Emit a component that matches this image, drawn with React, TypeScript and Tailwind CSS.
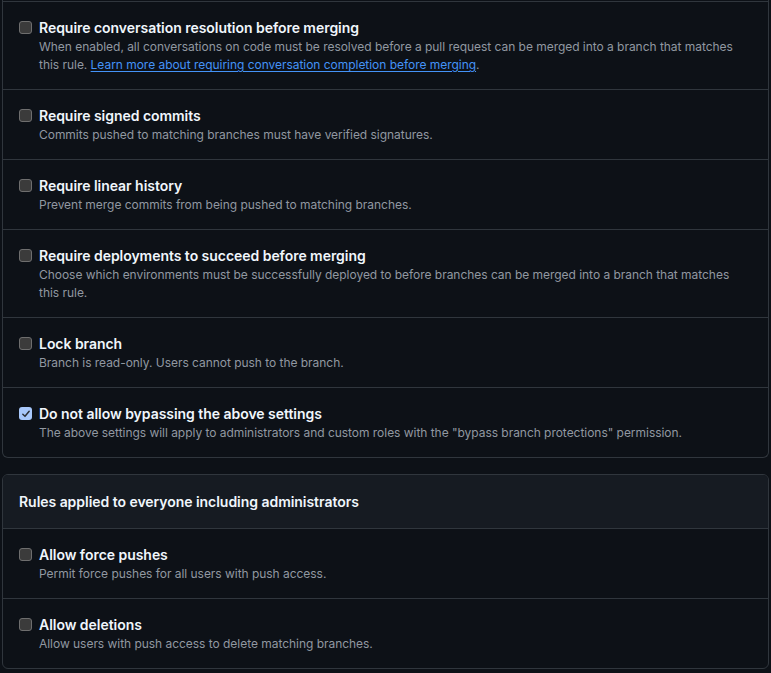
import React from "react";

type Rule = {
  title: string;
  desc: React.ReactNode;
  checked?: boolean;
};

const protections: Rule[] = [
  {
    title: "Require conversation resolution before merging",
    desc: (
      <>
        When enabled, all conversations on code must be resolved before a pull request can be merged into a branch
        that matches this rule.{" "}
        <a href="#" className="text-[#4493f8] underline underline-offset-2">
          Learn more about requiring conversation completion before merging
        </a>
        .
      </>
    ),
  },
  {
    title: "Require signed commits",
    desc: "Commits pushed to matching branches must have verified signatures.",
  },
  {
    title: "Require linear history",
    desc: "Prevent merge commits from being pushed to matching branches.",
  },
  {
    title: "Require deployments to succeed before merging",
    desc: "Choose which environments must be successfully deployed to before branches can be merged into a branch that matches this rule.",
  },
  {
    title: "Lock branch",
    desc: "Branch is read-only. Users cannot push to the branch.",
  },
  {
    title: "Do not allow bypassing the above settings",
    desc: 'The above settings will apply to administrators and custom roles with the "bypass branch protections" permission.',
    checked: true,
  },
];

const everyone: Rule[] = [
  {
    title: "Allow force pushes",
    desc: "Permit force pushes for all users with push access.",
  },
  {
    title: "Allow deletions",
    desc: "Allow users with push access to delete matching branches.",
  },
];

function Checkbox({ checked }: { checked?: boolean }) {
  if (checked) {
    return (
      <span className="mt-[4px] flex h-[13px] w-[13px] shrink-0 items-center justify-center rounded-[3px] bg-[#a8c8fb]">
        <svg viewBox="0 0 12 12" className="h-[10px] w-[10px]" fill="none">
          <path d="M2.2 6.3 4.8 8.8 9.8 2.8" stroke="#2b2f36" strokeWidth="1.8" strokeLinecap="round" strokeLinejoin="round" />
        </svg>
      </span>
    );
  }
  return (
    <span className="mt-[4px] h-[13px] w-[13px] shrink-0 rounded-[3px] border border-[#6e6e6e] bg-[#3b3b3b]" />
  );
}

function RuleRow({ rule, first }: { rule: Rule; first?: boolean }) {
  return (
    <div className={`flex gap-[7px] pl-4 pr-4 pt-[15px] pb-[15px] ${first ? "" : "border-t border-[#30363d]"}`}>
      <Checkbox checked={rule.checked} />
      <div className="min-w-0">
        <div className="text-[14px] font-semibold leading-[21px] tracking-[-0.04px] text-[#f0f6fc]">{rule.title}</div>
        <p className="text-[12px] leading-[18px] tracking-[-0.035px] text-[#9198a1]">{rule.desc}</p>
      </div>
    </div>
  );
}

export default function App() {
  return (
    <div
      className="min-h-[673px] w-[771px] bg-[#0d1117] pl-[2px]"
      style={{ fontFamily: "Inter, 'Noto Sans', sans-serif" }}
    >
      {/* Branch protection rules (continued) */}
      <div className="w-[767px] rounded-b-md border-x border-b border-[#30363d] pt-px">
        <div className="border-t border-[#30363d]">
          {protections.map((r, i) => (
            <RuleRow key={r.title} rule={r} first={i === 0} />
          ))}
        </div>
      </div>

      {/* Everyone */}
      <div className="mt-4 w-[767px] overflow-hidden rounded-md border border-[#30363d]">
        <div className="border-b border-[#30363d] bg-[#161b22] px-4 py-4 text-[14px] font-semibold leading-[21px] tracking-[-0.04px] text-[#f0f6fc]">
          Rules applied to everyone including administrators
        </div>
        {everyone.map((r, i) => (
          <RuleRow key={r.title} rule={r} first={i === 0} />
        ))}
      </div>
    </div>
  );
}
